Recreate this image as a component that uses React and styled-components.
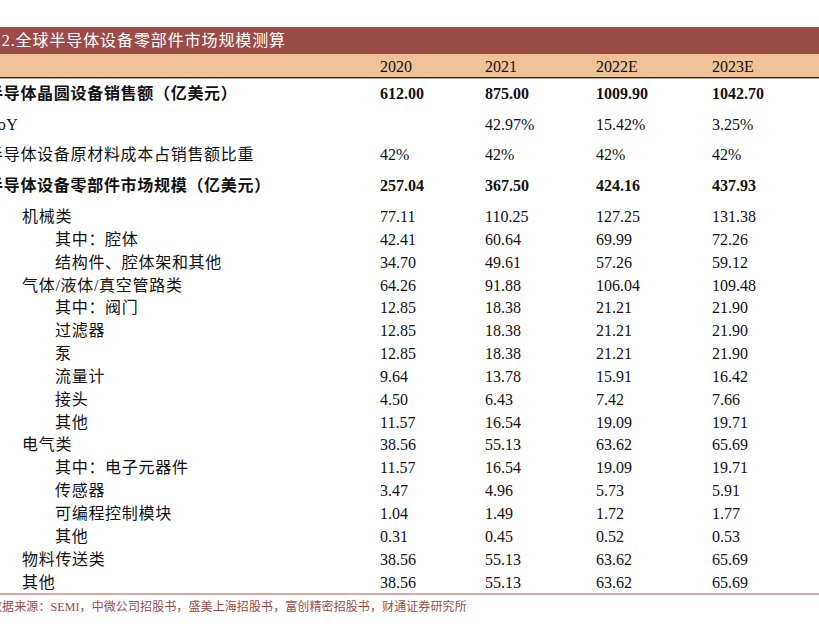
import React from "react";
import styled, { createGlobalStyle } from "styled-components";

const GlobalStyle = createGlobalStyle`
  html, body {
    margin: 0;
    padding: 0;
    background: #ffffff;
    overflow: hidden;
  }
`;

const Page = styled.div`
  width: 819px;
  height: 638px;
  overflow: hidden;
  padding-top: 27px;
  box-sizing: border-box;
`;

const Sheet = styled.div`
  width: 834px;
  margin-left: -15px;
  font-family: "Liberation Serif", "Noto Sans CJK SC", serif;
  color: #111111;
`;

const TitleBar = styled.div`
  height: 27px;
  background: #9b4b48;
  color: #ffffff;
  font-size: 16px;
  line-height: 27px;
  letter-spacing: 0.9px;
  text-indent: -9px;
  white-space: nowrap;
`;

const Grid = styled.div`
  display: grid;
  grid-template-columns: 395px 105px 111px 116px 1fr;
`;

const HeadRow = styled(Grid)`
  height: 23px;
  background: #efc397;
  border-bottom: 1px solid #222222;
  box-shadow: 0 1px 0 #b0a8a0;
  font-size: 16px;
  line-height: 26px;
`;

const HeadCell = styled.div`
  white-space: nowrap;
`;

const Row = styled(Grid)`
  box-sizing: border-box;
  height: ${(p) => p.$h}px;
  padding-top: ${(p) => p.$pt}px;
  align-items: start;
  font-size: 16px;
  line-height: 20px;
  font-weight: ${(p) => (p.$bold ? 700 : 400)};
`;

const Label = styled.div`
  height: 20px;
  padding-left: ${(p) => [2, 37, 70][p.$level]}px;
  letter-spacing: 0.7px;
  white-space: nowrap;
`;

const Value = styled.div`
  height: 20px;
  white-space: nowrap;
`;

const Rule = styled.div`
  height: 2px;
  background: #d8a6a3;
  margin-top: 1px;
`;

const Source = styled.div`
  padding-left: 5px;
  height: 24px;
  line-height: 24px;
  font-size: 12px;
  letter-spacing: 0.1px;
  color: #9b4b48;
  white-space: nowrap;
`;

const years = ["2020", "2021", "2022E", "2023E"];

const rows = [
  { label: "半导体晶圆设备销售额（亿美元）", values: ["612.00", "875.00", "1009.90", "1042.70"], bold: true, level: 0, h: 31, pt: 6 },
  { label: "YoY", values: ["", "42.97%", "15.42%", "3.25%"], level: 0, h: 31, pt: 6 },
  { label: "半导体设备原材料成本占销售额比重", values: ["42%", "42%", "42%", "42%"], level: 0, h: 31, pt: 5 },
  { label: "半导体设备零部件市场规模（亿美元）", values: ["257.04", "367.50", "424.16", "437.93"], bold: true, level: 0, h: 33, pt: 5 },
  { label: "机械类", values: ["77.11", "110.25", "127.25", "131.38"], level: 1 },
  { label: "其中：腔体", values: ["42.41", "60.64", "69.99", "72.26"], level: 2 },
  { label: "结构件、腔体架和其他", values: ["34.70", "49.61", "57.26", "59.12"], level: 2 },
  { label: "气体/液体/真空管路类", values: ["64.26", "91.88", "106.04", "109.48"], level: 1 },
  { label: "其中：阀门", values: ["12.85", "18.38", "21.21", "21.90"], level: 2 },
  { label: "过滤器", values: ["12.85", "18.38", "21.21", "21.90"], level: 2 },
  { label: "泵", values: ["12.85", "18.38", "21.21", "21.90"], level: 2 },
  { label: "流量计", values: ["9.64", "13.78", "15.91", "16.42"], level: 2 },
  { label: "接头", values: ["4.50", "6.43", "7.42", "7.66"], level: 2 },
  { label: "其他", values: ["11.57", "16.54", "19.09", "19.71"], level: 2 },
  { label: "电气类", values: ["38.56", "55.13", "63.62", "65.69"], level: 1 },
  { label: "其中：电子元器件", values: ["11.57", "16.54", "19.09", "19.71"], level: 2 },
  { label: "传感器", values: ["3.47", "4.96", "5.73", "5.91"], level: 2 },
  { label: "可编程控制模块", values: ["1.04", "1.49", "1.72", "1.77"], level: 2 },
  { label: "其他", values: ["0.31", "0.45", "0.52", "0.53"], level: 2 },
  { label: "物料传送类", values: ["38.56", "55.13", "63.62", "65.69"], level: 1 },
  { label: "其他", values: ["38.56", "55.13", "63.62", "65.69"], level: 1 },
];

export default function App() {
  return (
    <Page>
      <GlobalStyle />
      <Sheet>
        <TitleBar>图12.全球半导体设备零部件市场规模测算</TitleBar>
        <HeadRow>
          <HeadCell />
          {years.map((y) => (
            <HeadCell key={y}>{y}</HeadCell>
          ))}
          <HeadCell />
        </HeadRow>
        {rows.map((r, i) => (
          <Row key={i} $h={r.h || 22.85} $pt={r.pt ?? 3} $bold={r.bold}>
            <Label $level={r.level}>{r.label}</Label>
            {r.values.map((v, j) => (
              <Value key={j}>{v}</Value>
            ))}
            <Value />
          </Row>
        ))}
        <Rule />
        <Source>
          数据来源：SEMI，中微公司招股书，盛美上海招股书，富创精密招股书，财通证券研究所
        </Source>
      </Sheet>
    </Page>
  );
}
